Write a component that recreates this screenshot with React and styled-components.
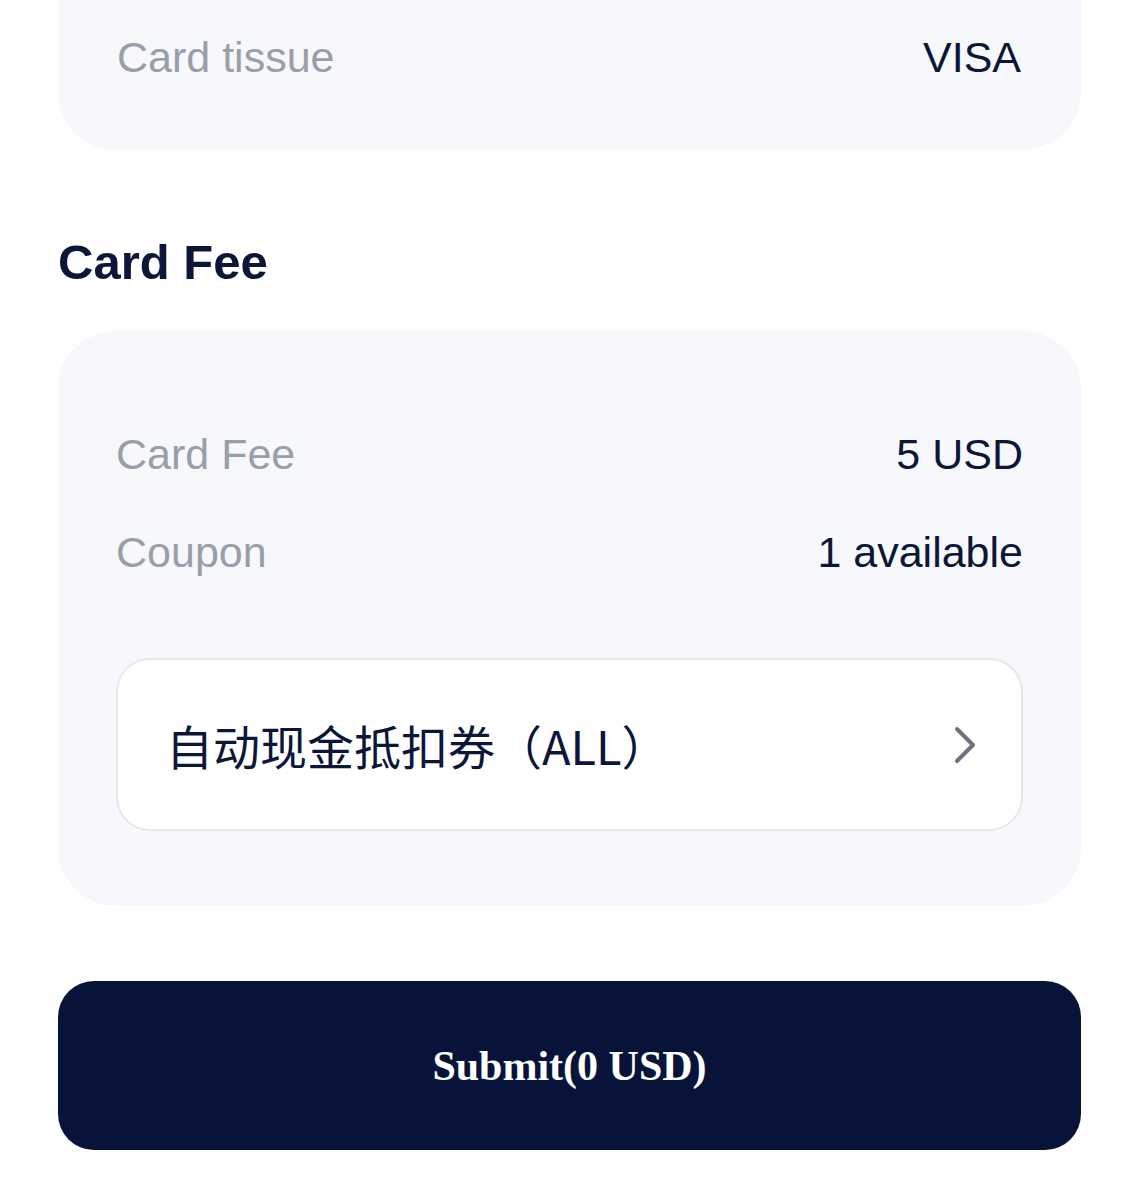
import React from "react";
import styled, { createGlobalStyle } from "styled-components";

const GlobalStyle = createGlobalStyle`
  body {
    margin: 0;
    background: #ffffff;
    font-family: "Liberation Sans", Arial, sans-serif;
  }
`;

function App() {
  return (
    <>
      <GlobalStyle />
      <Page>
        <InfoCard $clipped>
          <Row>
            <Label>Card tissue</Label>
            <Value>VISA</Value>
          </Row>
        </InfoCard>

        <Heading>Card Fee</Heading>

        <InfoCard>
          <Row>
            <Label>Card Fee</Label>
            <Value>5 USD</Value>
          </Row>
          <Row>
            <Label>Coupon</Label>
            <Value>1 available</Value>
          </Row>
          <CouponPicker>
            <CouponText>自动现金抵扣券（ALL）</CouponText>
            <Chevron width="24" height="38" viewBox="0 0 24 38">
              <polyline points="4,3 20,19 4,35" />
            </Chevron>
          </CouponPicker>
        </InfoCard>

        <SubmitButton>Submit(0 USD)</SubmitButton>
      </Page>
    </>
  );
}

export default App;

const Page = styled.div`
  width: 1023px;
  padding: 0 58px 50px;
  display: flex;
  flex-direction: column;
`;

const InfoCard = styled.div`
  background: #f7f8fc;
  border-radius: ${props => (props.$clipped ? "0 0 58px 58px" : "58px")};
  padding: ${props => (props.$clipped ? "8px 60px 44px 59px" : "74px 58px 75px")};
  display: flex;
  flex-direction: column;
`;

const Row = styled.div`
  height: 98px;
  display: flex;
  align-items: center;
  justify-content: space-between;
  font-size: 43px;
`;

const Label = styled.span`
  color: #999ea9;
`;

const Value = styled.span`
  color: #0c1638;
`;

const Heading = styled.h2`
  margin: 82px 0 39px;
  line-height: 60px;
  font-size: 49px;
  font-weight: 700;
  color: #0c1638;
`;

const CouponPicker = styled.div`
  margin-top: 57px;
  height: 169px;
  background: #ffffff;
  border: 2px solid #e5e7ec;
  border-radius: 34px;
  display: flex;
  align-items: center;
  justify-content: space-between;
  padding: 0 44px 0 48px;
`;

const CouponText = styled.span`
  font-family: "Noto Sans CJK SC", "Liberation Sans", sans-serif;
  font-size: 47px;
  color: #0c1638;
`;

const Chevron = styled.svg`
  fill: none;
  stroke: #6e7280;
  stroke-width: 4;
  stroke-linecap: round;
  stroke-linejoin: round;
`;

const SubmitButton = styled.button`
  margin-top: 75px;
  height: 169px;
  border: none;
  border-radius: 36px;
  background: #08133a;
  color: #ffffff;
  font-family: "Liberation Serif", "Times New Roman", serif;
  font-size: 42px;
  font-weight: 700;
  cursor: pointer;
`;
